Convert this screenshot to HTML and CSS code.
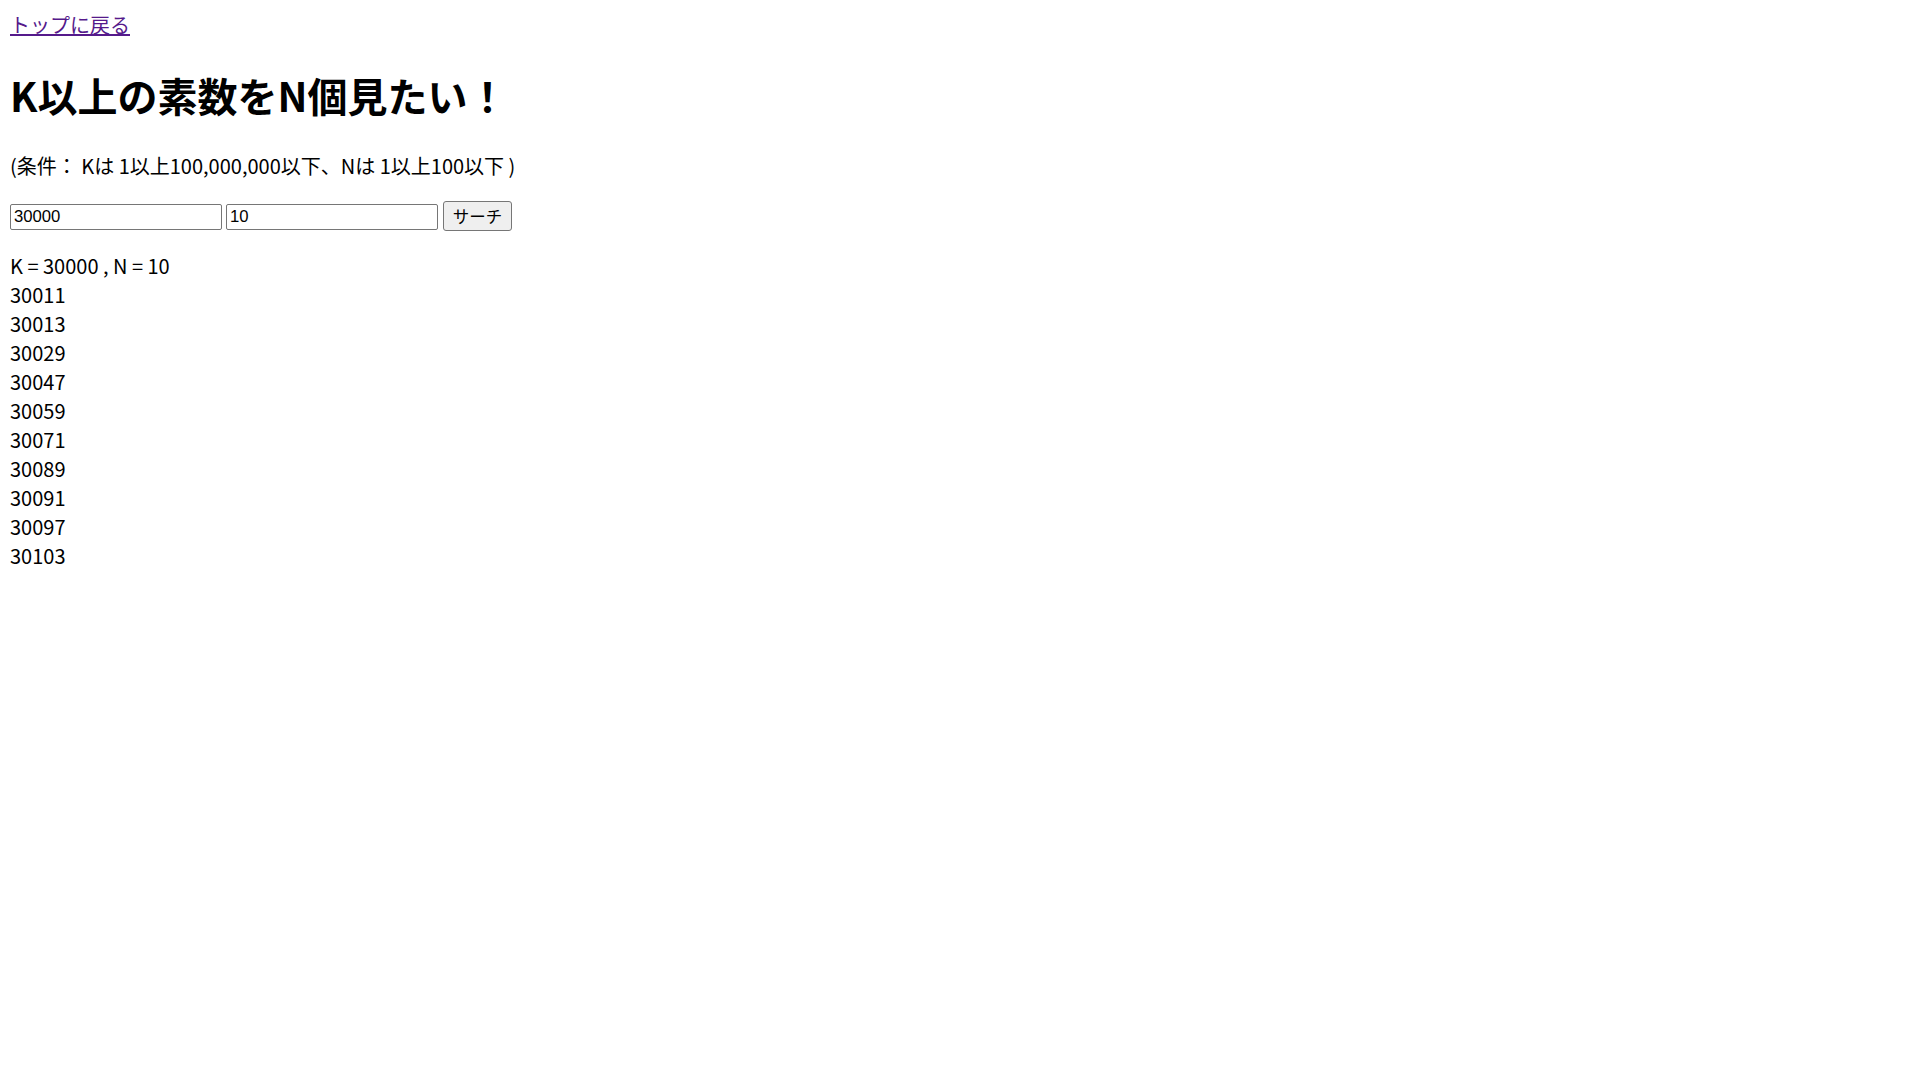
FILE: index.html
```html
<!DOCTYPE html>
<html lang="ja">
<head>
<meta charset="utf-8">
<title>K以上の素数をN個見たい！</title>
<link rel="stylesheet" href="styles.css">
</head>
<body>
<a class="back" href="#">トップに戻る</a>
<h1 class="title">K以上の素数をN個見たい！</h1>
<p class="cond">(条件： Kは 1以上100,000,000以下、Nは 1以上100以下 )</p>
<form class="search">
  <input class="field first" type="text" value="30000">
  <input class="field second" type="text" value="10">
  <button class="btn" type="button">サーチ</button>
</form>
<div class="results">
  <div class="line">K = 30000 , N = 10</div>
  <div class="line">30011</div>
  <div class="line">30013</div>
  <div class="line">30029</div>
  <div class="line">30047</div>
  <div class="line">30059</div>
  <div class="line">30071</div>
  <div class="line">30089</div>
  <div class="line">30091</div>
  <div class="line">30097</div>
  <div class="line">30103</div>
</div>
</body>
</html>
```

FILE: styles.css
```css
html, body {
  background: #ffffff;
}
body {
  margin: 10px;
  font-family: "Noto Sans CJK JP", "Noto Sans", sans-serif;
  font-size: 20px;
  line-height: 29px;
  color: #000000;
}
.back {
  color: #551a8b;
  text-decoration: underline;
}
.title {
  font-size: 40px;
  font-weight: 700;
  line-height: 58px;
  margin: 27px 0;
}
.cond {
  margin: 20px 0;
}
.search {
  display: flex;
  align-items: flex-end;
  margin: 20px 0 21px 0;
  height: 30px;
}
.field {
  box-sizing: border-box;
  width: 212px;
  height: 26px;
  margin: 0;
  padding: 1px 3px;
  border: 1px solid #767676;
  border-radius: 2px;
  font-family: "Liberation Sans", Arial, sans-serif;
  font-size: 16.7px;
  color: #000000;
  background: #ffffff;
  outline: none;
}
.first {
  margin-right: 4px;
}
.second {
  margin-right: 5px;
}
.btn {
  box-sizing: border-box;
  width: 69px;
  height: 30px;
  margin: 0 0 -1px 0;
  padding: 0 6px;
  border: 1px solid #767676;
  border-radius: 3px;
  background: #efefef;
  font-family: "Noto Sans CJK JP", sans-serif;
  font-size: 16.5px;
  line-height: 1;
  color: #000000;
}
.results {
  margin: 0;
}
.line {
  height: 29px;
}
```
